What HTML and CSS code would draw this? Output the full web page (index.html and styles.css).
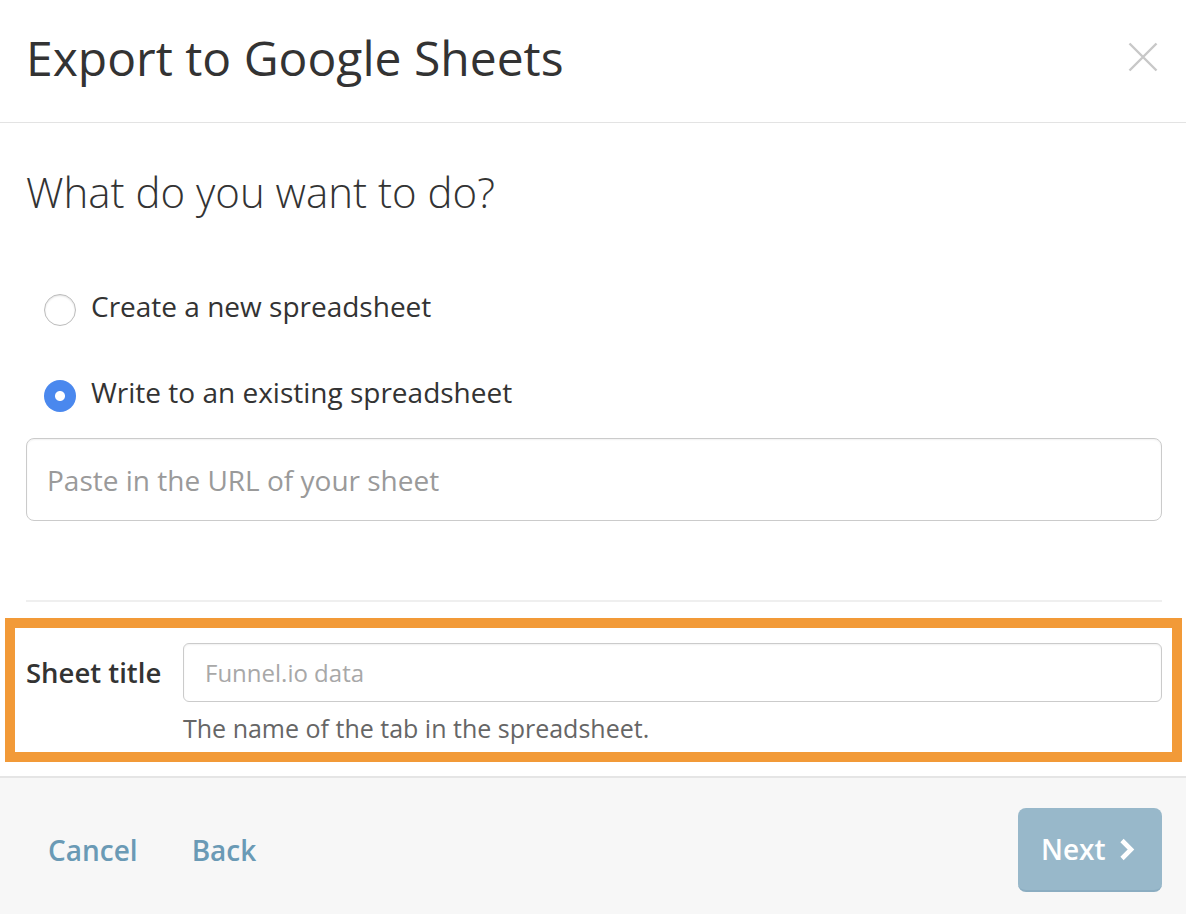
FILE: index.html
```html
<!DOCTYPE html>
<html lang="en">
<head>
<meta charset="utf-8">
<title>Export to Google Sheets</title>
<link rel="stylesheet" href="styles.css">
</head>
<body>
<div class="modal">
  <header class="modal-header">
    <h1 class="modal-title">Export to Google Sheets</h1>
    <button class="close" type="button" aria-label="Close">
      <svg width="30" height="30" viewBox="0 0 30 30"><path d="M1.5 1.5 L28.5 28.5 M28.5 1.5 L1.5 28.5" stroke="#c8c8c8" stroke-width="2.4" fill="none"/></svg>
    </button>
  </header>
  <main class="modal-body">
    <h2 class="question">What do you want to do?</h2>
    <div class="options">
      <label class="option"><span class="radio"></span><span class="option-text">Create a new spreadsheet</span></label>
      <label class="option"><span class="radio radio-checked"></span><span class="option-text">Write to an existing spreadsheet</span></label>
    </div>
    <input class="url-input" type="text" placeholder="Paste in the URL of your sheet">
    <div class="separator"></div>
    <div class="highlight">
      <div class="field">
        <label class="field-label">Sheet title</label>
        <div class="field-control">
          <input class="title-input" type="text" placeholder="Funnel.io data">
          <p class="help">The name of the tab in the spreadsheet.</p>
        </div>
      </div>
    </div>
  </main>
  <footer class="modal-footer">
    <div class="footer-links">
      <a class="link">Cancel</a>
      <a class="link">Back</a>
    </div>
    <button class="next" type="button">Next<svg width="20" height="23" viewBox="0 0 20 23"><path d="M4 2.5 L13 11.5 L4 20.5" stroke="#fff" stroke-width="4.6" fill="none" stroke-linejoin="miter"/></svg></button>
  </footer>
</div>
</body>
</html>
```

FILE: styles.css
```css
* { box-sizing: border-box; }
html, body { margin: 0; padding: 0; background: #fff; }
body { font-family: "Open Sans", "Noto Sans", sans-serif; color: #333; }

.modal { display: flex; flex-direction: column; min-height: 914px; }

.modal-header {
  display: flex;
  justify-content: space-between;
  align-items: flex-start;
  height: 123px;
  padding: 27px 28px 0 26px;
  border-bottom: 1px solid #e3e3e3;
}
.modal-title {
  margin: 0;
  font-size: 48px;
  font-weight: 400;
  line-height: 62px;
  color: #333;
}
.close {
  margin-top: 15px;
  padding: 0;
  border: 0;
  background: none;
  width: 30px;
  height: 30px;
}
.close svg { display: block; }

.modal-body { padding: 0 24px 0 26px; display: flex; flex-direction: column; }
.question {
  margin: 41px 0 0;
  font-size: 42px;
  font-weight: 300;
  line-height: 56px;
  color: #333;
}
.options { display: flex; flex-direction: column; gap: 46px; margin-top: 66px; }
.option { display: flex; align-items: flex-start; gap: 15px; padding-left: 18px; }
.radio {
  flex: none;
  width: 32px;
  height: 32px;
  margin-top: 8px;
  border-radius: 50%;
  border: 1px solid #bcbcbc;
  background: #fff;
  box-shadow: inset 0 1px 2px rgba(0,0,0,0.12);
}
.radio-checked {
  border: 0;
  background: radial-gradient(circle, #fff 0 4.5px, #4a88ee 5.5px);
  box-shadow: none;
}
.option-text { font-size: 28px; line-height: 40px; color: #333; }

.url-input {
  margin-top: 26px;
  height: 83px;
  width: 100%;
  border: 1px solid #cbcbcb;
  border-radius: 8px;
  padding: 0 20px;
  font-family: inherit;
  font-size: 28px;
  color: #333;
  box-shadow: inset 0 1px 2px rgba(0,0,0,0.06);
  outline: none;
}
.url-input::placeholder { color: #9a9a9a; }

.separator { margin-top: 79px; height: 2px; background: #efefef; }

.highlight {
  margin: 16px -20px 0 -21px;
  border: 10px solid #f29a38;
  padding: 15px 10px 8px 11px;
}
.field { display: flex; align-items: flex-start; }
.field-label {
  width: 157px;
  flex: none;
  font-size: 27.5px;
  font-weight: 600;
  line-height: 59px;
  color: #333;
}
.field-control { flex: 1; display: flex; flex-direction: column; }
.title-input {
  height: 59px;
  width: 100%;
  border: 1px solid #cbcbcb;
  border-radius: 6px;
  padding: 0 21px;
  font-family: inherit;
  font-size: 24px;
  color: #333;
  box-shadow: inset 0 1px 2px rgba(0,0,0,0.06);
  outline: none;
}
.title-input::placeholder { color: #a8a8a8; }
.help { margin: 10px 0 0; font-size: 25px; line-height: 32px; color: #666; }

.modal-footer {
  flex: 1;
  margin-top: 14px;
  border-top: 2px solid #e5e5e5;
  background: #f7f7f7;
  display: flex;
  justify-content: space-between;
  align-items: flex-start;
  padding: 30px 24px 0 48px;
}
.footer-links { display: flex; gap: 54px; height: 84px; align-items: center; }
.link { font-size: 28px; font-weight: 600; color: #6a9ab5; line-height: 40px; }
.next {
  display: flex;
  align-items: center;
  gap: 12px;
  height: 84px;
  width: 144px;
  padding: 0 0 0 23px;
  border: 0;
  border-bottom: 2px solid #8badc1;
  border-radius: 8px;
  background: #98b8ca;
  color: #fff;
  font-family: inherit;
  font-size: 28px;
  font-weight: 600;
}
.next svg { display: block; }
```
